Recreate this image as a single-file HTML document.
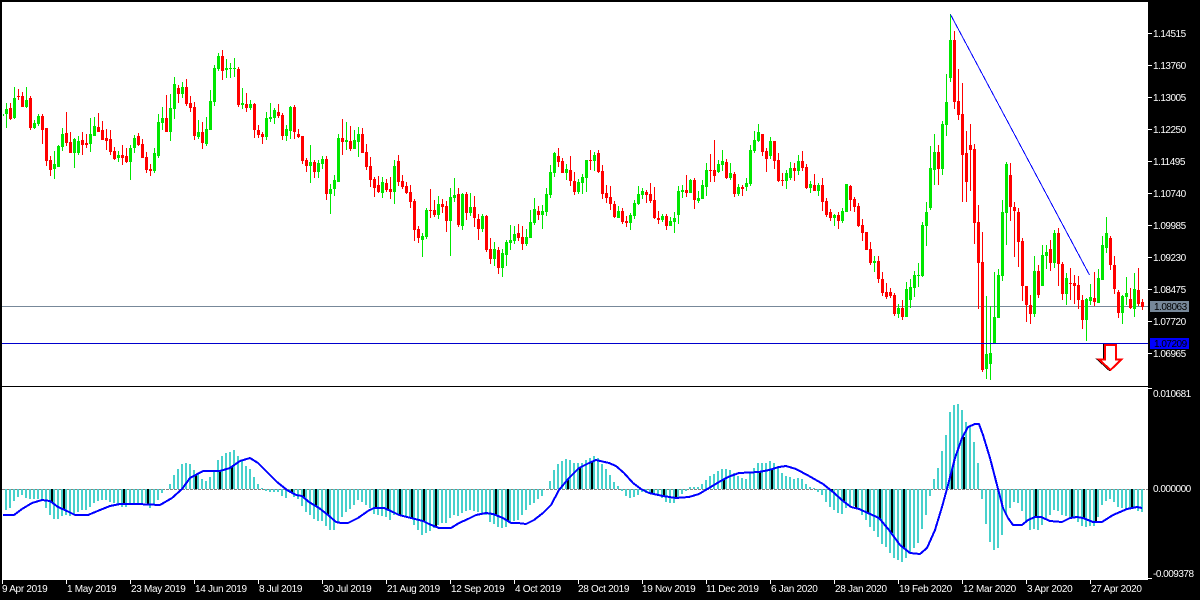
<!DOCTYPE html>
<html><head><meta charset="utf-8"><title>Chart</title>
<style>
html,body{margin:0;padding:0;background:#000;width:1200px;height:600px;overflow:hidden}
svg{display:block}
text{font-family:"Liberation Sans",sans-serif;font-size:10px;fill:#fff;letter-spacing:-.5px}
.t text{letter-spacing:-.3px}
.g{stroke:#00e600;fill:none}.r{stroke:#f00;fill:none}
.w{stroke-width:1}.b{stroke-width:3}
</style></head><body>
<svg width="1200" height="600" viewBox="0 0 1200 600" xmlns="http://www.w3.org/2000/svg">
<rect width="1200" height="600" fill="#000"/>
<rect x="2" y="2" width="1146" height="384" fill="#fff"/>
<rect x="2" y="387" width="1146" height="193" fill="#fff"/>
<g shape-rendering="crispEdges">
<path d="M2 306.5H1148" stroke="#789" stroke-width="1"/>

<g transform="scale(1 .333333)">
<path class="g w" d="M3.5 342V348M6.5 309V384M14.5 261V357M26.5 261V324M34.5 360V387M38.5 342V378M54.5 453V537M58.5 435V501M62.5 384V453M74.5 414V504M78.5 408V465M90.5 354V456M94.5 351V408M118.5 453V486M130.5 435V540M134.5 405V459M154.5 444V519M158.5 342V474M162.5 321V390M170.5 282V423M174.5 231V357M182.5 246V294M198.5 360V417M206.5 351V438M210.5 270V390M214.5 195V318M218.5 159V213M226.5 177V234M230.5 189V234M234.5 174V231M242.5 264V327M250.5 300V330M266.5 336V420M270.5 309V366M274.5 324V372M286.5 375V423M290.5 318V417"/>
<path class="g b" d="M6.5 327V342M14.5 294V354M26.5 300V321M34.5 369V384M38.5 348V372M54.5 492V507M58.5 438V501M62.5 402V441M74.5 417V459M78.5 423V459M90.5 402V432M94.5 378V408M118.5 465V474M130.5 444V486M134.5 414V444M154.5 459V513M158.5 366V468M162.5 354V369M170.5 324V396M174.5 252V327M182.5 261V282M198.5 396V411M206.5 387V432M210.5 303V390M214.5 204V306M218.5 168V207M226.5 204V210M230.5 204V207M234.5 204V207M242.5 309V315M250.5 312V324M266.5 354V411M270.5 351V357M274.5 330V354M286.5 387V408M290.5 321V393"/>
<path class="r w" d="M10.5 309V360M18.5 267V300M22.5 276V321M30.5 288V390M42.5 342V432M46.5 384V498M50.5 468V528M66.5 336V438M70.5 396V459M82.5 396V465M86.5 402V444M98.5 339V396M102.5 363V420M106.5 387V450M110.5 390V465M114.5 441V480M122.5 435V495M126.5 444V489M138.5 399V438M142.5 417V474M146.5 456V519M150.5 492V528M166.5 285V396M178.5 255V309M186.5 237V318M190.5 288V336M194.5 306V420M202.5 366V447M222.5 150V240M238.5 201V321M246.5 279V336M254.5 309V414M258.5 375V414M262.5 396V432M278.5 312V354M282.5 339V420M294.5 315V417M298.5 387V414"/>
<path class="r b" d="M10.5 324V357M18.5 288V291M22.5 288V321M30.5 294V384M42.5 348V390M46.5 384V483M50.5 480V510M66.5 399V429M70.5 426V459M82.5 420V435M86.5 429V435M98.5 381V396M102.5 390V420M106.5 414V423M110.5 417V456M114.5 453V477M122.5 465V474M126.5 468V486M138.5 408V435M142.5 432V474M146.5 471V510M150.5 507V513M166.5 354V396M178.5 264V282M186.5 261V312M190.5 309V324M194.5 321V408M202.5 396V429M222.5 168V213M238.5 207V315M246.5 312V324M254.5 312V390M258.5 390V405M262.5 402V411M278.5 336V348M282.5 345V408M294.5 321V396M298.5 402V411"/>
</g>

<g transform="translate(0 100) scale(1 .333333)">
<path class="g w" d="M310.5 135V249M318.5 180V234M322.5 168V207M330.5 252V342M334.5 225V288M338.5 102V246M346.5 66V150M354.5 90V147M358.5 81V171M382.5 231V294M394.5 180V312M422.5 399V471M426.5 324V417M438.5 288V357M450.5 264V468M454.5 234V306M462.5 279V390M470.5 279V348M482.5 342V396M494.5 426V498M502.5 447V531M506.5 420V498M510.5 375V450M514.5 378V432M526.5 387V438M530.5 330V414M534.5 294V375M542.5 315V387M546.5 264V348M550.5 195V294M554.5 156V231M566.5 192V240M578.5 237V282M582.5 222V282M586.5 180V276M594.5 156V213"/>
<path class="g b" d="M310.5 186V198M318.5 189V216M322.5 177V192M330.5 267V282M334.5 240V267M338.5 114V246M346.5 120V126M354.5 120V147M358.5 102V126M382.5 246V279M394.5 198V276M422.5 408V420M426.5 330V411M438.5 312V345M450.5 291V363M454.5 285V294M462.5 282V378M470.5 321V339M482.5 348V387M494.5 447V477M502.5 459V504M506.5 426V465M510.5 420V429M514.5 402V423M526.5 411V432M530.5 366V414M534.5 327V369M542.5 333V345M546.5 282V336M550.5 216V285M554.5 159V219M566.5 207V219M578.5 246V276M582.5 231V249M586.5 180V234M594.5 165V183"/>
<path class="r w" d="M302.5 108V192M306.5 174V216M314.5 180V234M326.5 168V300M342.5 57V165M350.5 78V153M362.5 84V159M366.5 132V210M370.5 171V261M374.5 231V291M378.5 228V279M386.5 237V276M390.5 231V297M398.5 165V258M402.5 225V267M406.5 246V282M410.5 255V324M414.5 297V423M418.5 378V429M430.5 267V354M434.5 300V351M442.5 297V339M446.5 303V396M458.5 264V381M466.5 276V360M474.5 288V381M478.5 342V420M486.5 345V456M490.5 414V492M498.5 441V522M518.5 372V423M522.5 378V450M538.5 318V360M558.5 144V201M562.5 174V219M570.5 168V258M574.5 216V285M590.5 150V210M598.5 150V219"/>
<path class="r b" d="M302.5 108V183M306.5 180V198M314.5 186V216M326.5 177V282M342.5 114V126M350.5 123V147M362.5 102V159M366.5 156V201M370.5 198V240M374.5 237V264M378.5 255V276M386.5 249V270M390.5 267V276M398.5 183V246M402.5 243V261M406.5 258V279M410.5 276V306M414.5 303V390M418.5 387V414M430.5 330V333M434.5 330V345M442.5 312V321M446.5 318V363M458.5 282V375M466.5 282V339M474.5 321V354M478.5 357V387M486.5 348V450M490.5 447V477M498.5 450V504M518.5 399V414M522.5 411V432M538.5 333V345M558.5 168V186M562.5 183V219M570.5 210V243M574.5 243V276M590.5 180V183M598.5 159V216"/>
</g>

<g transform="translate(0 110) scale(1 .333333)">
<path class="g w" d="M618.5 288V324M630.5 309V360M634.5 270V327M638.5 228V285M642.5 234V267M662.5 312V336M670.5 321V348M674.5 306V369M678.5 228V342M682.5 225V264M690.5 207V249M698.5 243V279M702.5 210V267M706.5 159V258M718.5 150V189M722.5 120V183M730.5 159V210M738.5 222V258M746.5 204V243M750.5 105V228M754.5 63V129M758.5 42V96M770.5 81V147M786.5 180V237M790.5 156V210M798.5 135V195M810.5 213V249M818.5 219V258M834.5 312V348M842.5 294V339M846.5 222V306M874.5 438V486M898.5 582V624"/>
<path class="g b" d="M618.5 303V324M630.5 315V339M634.5 279V318M638.5 252V282M642.5 243V255M662.5 318V330M670.5 333V348M674.5 324V336M678.5 243V315M682.5 240V246M690.5 210V249M698.5 264V273M702.5 225V267M706.5 180V231M718.5 162V186M722.5 153V165M730.5 189V204M738.5 231V252M746.5 219V231M750.5 120V222M754.5 90V123M758.5 66V93M770.5 93V138M786.5 189V213M790.5 174V204M798.5 153V183M810.5 222V234M818.5 225V243M834.5 315V324M842.5 303V333M846.5 222V306M874.5 453V459M898.5 594V612"/>
<path class="r w" d="M602.5 165V267M606.5 225V279M610.5 228V300M614.5 273V324M622.5 294V342M626.5 318V351M646.5 240V279M650.5 219V279M654.5 231V327M658.5 303V342M666.5 312V360M686.5 195V261M694.5 204V297M710.5 132V216M714.5 90V216M726.5 147V207M734.5 186V261M742.5 225V258M762.5 72V138M766.5 114V186M774.5 93V177M778.5 129V216M782.5 189V228M794.5 159V213M802.5 123V183M806.5 162V237M814.5 192V243M822.5 204V303M826.5 264V321M830.5 297V333M838.5 306V357M850.5 225V303M854.5 261V306M858.5 279V351M862.5 327V393M866.5 366V420M870.5 396V465M878.5 438V519M882.5 486V558M886.5 519V567M890.5 534V564M894.5 549V618M902.5 570V630"/>
<path class="r b" d="M602.5 183V252M606.5 249V264M610.5 261V282M614.5 282V321M622.5 303V336M626.5 333V339M646.5 246V255M650.5 252V273M654.5 270V324M658.5 324V330M666.5 318V348M686.5 240V249M694.5 210V270M710.5 180V183M714.5 180V198M726.5 156V204M734.5 192V252M742.5 231V237M762.5 72V126M766.5 123V147M774.5 93V153M778.5 150V213M782.5 210V213M794.5 174V183M802.5 153V174M806.5 171V234M814.5 225V243M822.5 225V276M826.5 273V315M830.5 306V324M838.5 315V333M850.5 228V270M854.5 267V291M858.5 288V348M862.5 345V369M866.5 366V420M870.5 417V459M878.5 453V507M882.5 507V549M886.5 546V561M890.5 546V558M894.5 555V612M902.5 594V621"/>
</g>

<path class="g w" d="M906.5 282V317M910.5 279V308M914.5 271V297M918.5 263V287M922.5 222V277M926.5 202V246M930.5 146V210M934.5 134V185M942.5 121V175M946.5 74V136M950.5 14V82M986.5 296V379M990.5 306V380M994.5 272V343M998.5 269V318M1002.5 200V281M1006.5 162V245M1034.5 256V317M1042.5 245V286M1046.5 245V269M1054.5 230V268M1066.5 273V305M1086.5 298V341M1090.5 284V305M1098.5 269V303M1102.5 236V280M1106.5 217V253M1122.5 295V324M1126.5 277V305M1134.5 273V317"/>
<path class="g b" d="M906.5 289V317M910.5 287V300M914.5 275V288M918.5 275V276M922.5 225V276M926.5 212V226M930.5 168V208M934.5 152V170M942.5 124V169M946.5 102V125M950.5 40V78M986.5 354V369M990.5 353V364M994.5 317V343M998.5 275V318M1002.5 212V276M1006.5 164V213M1034.5 271V314M1042.5 255V286M1046.5 252V256M1054.5 233V263M1066.5 278V294M1086.5 299V320M1090.5 297V301M1098.5 278V303M1102.5 245V280M1106.5 233V248M1122.5 296V313M1126.5 293V297M1134.5 289V309"/>
<path class="r w" d="M938.5 145V185M954.5 31V109M958.5 69V120M962.5 83V202M966.5 131V202M970.5 124V191M974.5 144V244M978.5 205V309M982.5 232V372M1010.5 163V221M1014.5 202V257M1018.5 208V267M1022.5 238V301M1026.5 286V322M1030.5 295V324M1038.5 265V298M1050.5 240V271M1058.5 228V286M1062.5 262V300M1070.5 268V300M1074.5 275V304M1078.5 276V309M1082.5 295V329M1094.5 272V306M1110.5 236V270M1114.5 256V294M1118.5 290V318M1130.5 288V309M1138.5 268V306M1142.5 299V310"/>
<path class="r b" d="M938.5 152V169M954.5 40V102M958.5 101V115M962.5 114V155M966.5 153V182M970.5 145V150M974.5 149V223M978.5 222V263M982.5 262V370M1010.5 175V207M1014.5 207V211M1018.5 212V242M1022.5 241V286M1026.5 286V305M1030.5 305V314M1038.5 271V295M1050.5 249V263M1058.5 233V264M1062.5 264V294M1070.5 283V284M1074.5 283V286M1078.5 285V300M1082.5 300V320M1094.5 298V302M1110.5 238V265M1114.5 265V289M1118.5 292V313M1130.5 299V308M1138.5 290V304M1142.5 302V307"/>

<path d="M2 343.5H1148" stroke="#0000cd" stroke-width="1"/>
<path d="M2 386.5H1148" stroke="#000" stroke-width="1"/>
</g>

<path d="M950.5 14.5L1089.5 275" stroke="#00f" stroke-width="1" fill="none" shape-rendering="crispEdges"/>
<g fill="#fff" shape-rendering="crispEdges" stroke-linejoin="miter">
<path d="M1105 345H1116V359.5H1121.5L1110.5 370L1099 359.5H1105Z" transform="translate(-1 0)" stroke="#000" stroke-width="2"/>
<path d="M1105 345H1116V359.5H1121.5L1110.5 370L1099 359.5H1105Z" stroke="#f00" stroke-width="2"/>
</g>

<g shape-rendering="crispEdges">
<path d="M2 489.5H1148" stroke="#808080" stroke-width="1" stroke-dasharray="3 1"/>
<path stroke="#48d1cc" stroke-width="2" fill="none" d="M6 489V510M10 489V508M14 489V501M18 489V497M22 489V495M26 489V498M30 489V499M34 489V499M38 489V499M42 489V499M46 489V508M50 489V515M54 489V519M58 489V519M62 489V516M66 489V515M70 489V516M74 489V515M78 489V512M82 489V510M86 489V510M90 489V507M94 489V503M98 489V501M102 489V500M106 489V500M110 489V502M114 489V503M118 489V505M122 489V507M126 489V507M130 489V505M134 489V503M138 489V503M142 489V503M146 489V503M150 489V508M154 489V505M158 489V500M162 489V493M170 489V484M174 489V475M178 489V469M182 489V464M186 489V463M190 489V464M194 489V470M198 489V473M202 489V479M206 489V481M210 489V477M214 489V472M218 489V460M222 489V456M226 489V453M230 489V452M234 489V450M238 489V456M242 489V460M246 489V466M250 489V469M254 489V477M258 489V484M262 489V488M266 489V491M270 489V492M274 489V492M278 489V492M282 489V496M286 489V498M290 489V493M294 489V497M298 489V499M302 489V506M306 489V512M310 489V515M314 489V519M318 489V521M322 489V521M326 489V526M330 489V530M334 489V530M338 489V522M342 489V517M346 489V512M350 489V509M354 489V505M358 489V500M362 489V502M366 489V505M370 489V508M374 489V514M378 489V515M382 489V516M386 489V517M390 489V520M394 489V515M398 489V515M402 489V516M406 489V517M410 489V518M414 489V525M418 489V530M422 489V535M426 489V533M430 489V531M434 489V528M438 489V525M442 489V523M446 489V523M450 489V518M454 489V515M458 489V516M462 489V513M466 489V511M470 489V510M474 489V511M478 489V512M482 489V513M486 489V515M490 489V522M494 489V524M498 489V527M502 489V528M506 489V527M510 489V523M514 489V521M518 489V520M522 489V515M526 489V510M530 489V505M534 489V503M538 489V499M542 489V496M550 489V481M554 489V470M558 489V464M562 489V461M566 489V459M570 489V460M574 489V463M578 489V463M582 489V463M586 489V460M590 489V458M594 489V456M598 489V458M602 489V464M606 489V469M610 489V475M614 489V482M618 489V486M622 489V491M626 489V496M630 489V498M634 489V497M638 489V495M642 489V492M646 489V493M650 489V493M654 489V493M658 489V495M662 489V498M666 489V502M670 489V503M674 489V503M678 489V497M682 489V494M686 489V491M690 489V487M694 489V487M698 489V487M702 489V484M706 489V480M710 489V476M714 489V474M718 489V471M722 489V469M726 489V469M730 489V470M734 489V473M738 489V476M742 489V478M746 489V479M750 489V473M754 489V468M758 489V463M762 489V463M766 489V463M770 489V461M774 489V463M778 489V466M782 489V473M786 489V476M790 489V477M794 489V479M798 489V478M802 489V479M806 489V484M810 489V487M814 489V488M818 489V492M822 489V495M826 489V502M830 489V507M834 489V510M838 489V513M842 489V514M846 489V508M850 489V505M854 489V506M858 489V508M862 489V515M866 489V520M870 489V527M874 489V531M878 489V537M882 489V544M886 489V547M890 489V553M894 489V558M898 489V560M902 489V562M906 489V558M910 489V553M914 489V548M918 489V543M922 489V529M926 489V515M930 489V496M934 489V479M938 489V468M942 489V451M946 489V435M950 489V412M954 489V405M958 489V404M962 489V410M966 489V422M970 489V426M974 489V442M978 489V463M982 489V499M986 489V524M990 489V542M994 489V550M998 489V548M1002 489V535M1006 489V515M1010 489V508M1014 489V502M1018 489V503M1022 489V511M1026 489V523M1030 489V530M1034 489V529M1038 489V530M1042 489V525M1046 489V518M1050 489V515M1054 489V510M1058 489V511M1062 489V515M1066 489V516M1070 489V518M1074 489V517M1078 489V522M1082 489V526M1086 489V527M1090 489V526M1094 489V526M1098 489V517M1102 489V505M1106 489V501M1110 489V499M1114 489V502M1118 489V507M1122 489V508M1126 489V510M1130 489V508M1134 489V507M1138 489V511M1142 489V512"/>
<path stroke="#000" stroke-width="2" fill="none" d="M52 489V502M64 489V510M124 489V504M148 489V505M196 489V474M220 489V471M232 489V467M292 489V493M304 489V497M316 489V506M328 489V515M376 489V508M388 489V510M400 489V515M412 489V518M424 489V521M436 489V527M496 489V515M508 489V521M568 489V479M580 489V467M592 489V461M652 489V494M664 489V496M676 489V498M724 489V479M760 489V472M772 489V469M832 489V491M844 489V502M856 489V508M868 489V513M880 489V519M892 489V533M904 489V549M952 489V470M964 489V437M1036 489V517M1072 489V518M1084 489V518M1096 489V522M1132 489V508"/>
</g>
<polyline fill="none" stroke="#00f" stroke-width="2" stroke-linejoin="round" shape-rendering="crispEdges" points="3,515 14,515 22,509 32,503 42,500 50,501 58,507 67,511 75,515 88,515 100,510 110,506 120,504 137,504 160,505 172,498 182,489 190,478 203,471 220,471 230,468 240,461 250,458 258,463 267,472 277,482 287,490 296,495 302,496 309,502 319,508 328,515 336,522 341,523 348,523 358,518 368,511 374,508 384,508 393,512 399,515 411,518 423,521 429,524 439,528 451,528 459,523 468,519 476,515 486,513 493,514 503,518 511,523 518,523 526,524 534,520 543,513 551,505 559,490 569,478 579,468 589,463 596,460 609,463 616,466 624,473 633,483 641,489 649,493 663,496 676,498 689,497 699,494 709,488 719,482 728,477 739,473 759,472 769,470 779,467 786,466 796,469 809,476 823,484 833,492 843,501 851,507 859,509 879,518 889,530 900,545 910,553 920,554 927,548 935,530 942,507 948,485 955,458 962,438 968,427 975,424 979,424 983,435 990,458 997,485 1003,508 1008,518 1013,525 1022,525 1028,520 1035,517 1041,517 1050,521 1062,522 1070,518 1077,517 1083,518 1093,522 1102,522 1113,515 1127,509 1137,507 1142,508"/>

<g shape-rendering="crispEdges">
<rect x="1150" y="301" width="39" height="11" fill="#789"/>
<rect x="1150" y="338" width="39" height="11" fill="#00f"/>
<path stroke="#fff" stroke-width="1" fill="none" d="M1148 33.5h4M1148 65.5h4M1148 97.5h4M1148 129.5h4M1148 161.5h4M1148 193.5h4M1148 225.5h4M1148 257.5h4M1148 289.5h4M1148 321.5h4M1148 353.5h4M1148 388.5h4M1148 578.5h4M2.5 580v4M66.5 580v4M130.5 580v4M194.5 580v4M258.5 580v4M322.5 580v4M386.5 580v4M450.5 580v4M514.5 580v4M578.5 580v4M642.5 580v4M706.5 580v4M770.5 580v4M834.5 580v4M898.5 580v4M962.5 580v4M1026.5 580v4M1090.5 580v4"/>
</g>
<text x="1153" y="37">1.14515</text>
<text x="1153" y="69">1.13760</text>
<text x="1153" y="101">1.13005</text>
<text x="1153" y="133">1.12250</text>
<text x="1153" y="165">1.11495</text>
<text x="1153" y="197">1.10740</text>
<text x="1153" y="229">1.09985</text>
<text x="1153" y="261">1.09230</text>
<text x="1153" y="293">1.08475</text>
<text x="1153" y="325">1.07720</text>
<text x="1153" y="357">1.06965</text>
<text x="1154" y="310" style="fill:#000">1.08063</text>
<text x="1154" y="347" style="fill:#000">1.07209</text>
<text x="1153" y="397">0.010681</text>
<text x="1153" y="492">0.000000</text>
<text x="1153" y="577">-0.009378</text>
<g class="t">
<text x="2" y="592">9 Apr 2019</text>
<text x="67" y="592">1 May 2019</text>
<text x="131" y="592">23 May 2019</text>
<text x="195" y="592">14 Jun 2019</text>
<text x="259" y="592">8 Jul 2019</text>
<text x="323" y="592">30 Jul 2019</text>
<text x="387" y="592">21 Aug 2019</text>
<text x="451" y="592">12 Sep 2019</text>
<text x="515" y="592">4 Oct 2019</text>
<text x="578" y="592">28 Oct 2019</text>
<text x="642" y="592">19 Nov 2019</text>
<text x="706" y="592">11 Dec 2019</text>
<text x="771" y="592">6 Jan 2020</text>
<text x="835" y="592">28 Jan 2020</text>
<text x="899" y="592">19 Feb 2020</text>
<text x="963" y="592">12 Mar 2020</text>
<text x="1027" y="592">3 Apr 2020</text>
<text x="1091" y="592">27 Apr 2020</text>
</g>
</svg>
</body></html>
